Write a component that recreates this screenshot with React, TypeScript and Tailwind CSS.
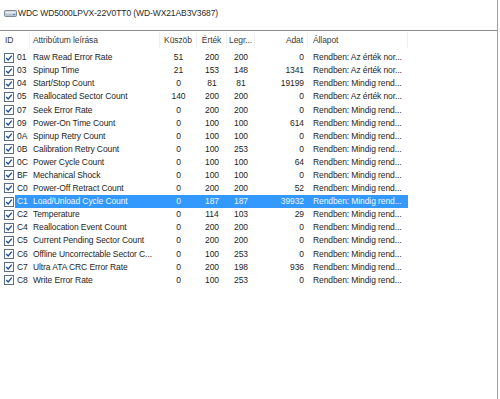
import React from 'react';

type Attr = {
  id: string;
  name: string;
  threshold: string;
  value: string;
  worst: string;
  raw: string;
  status: string;
};

const OK_NORM = 'Rendben: Az érték nor...';
const OK_ALWAYS = 'Rendben: Mindig rend...';

const attributes: Attr[] = [
  { id: '01', name: 'Raw Read Error Rate', threshold: '51', value: '200', worst: '200', raw: '0', status: OK_NORM },
  { id: '03', name: 'Spinup Time', threshold: '21', value: '153', worst: '148', raw: '1341', status: OK_NORM },
  { id: '04', name: 'Start/Stop Count', threshold: '0', value: '81', worst: '81', raw: '19199', status: OK_ALWAYS },
  { id: '05', name: 'Reallocated Sector Count', threshold: '140', value: '200', worst: '200', raw: '0', status: OK_NORM },
  { id: '07', name: 'Seek Error Rate', threshold: '0', value: '200', worst: '200', raw: '0', status: OK_ALWAYS },
  { id: '09', name: 'Power-On Time Count', threshold: '0', value: '100', worst: '100', raw: '614', status: OK_ALWAYS },
  { id: '0A', name: 'Spinup Retry Count', threshold: '0', value: '100', worst: '100', raw: '0', status: OK_ALWAYS },
  { id: '0B', name: 'Calibration Retry Count', threshold: '0', value: '100', worst: '253', raw: '0', status: OK_ALWAYS },
  { id: '0C', name: 'Power Cycle Count', threshold: '0', value: '100', worst: '100', raw: '64', status: OK_ALWAYS },
  { id: 'BF', name: 'Mechanical Shock', threshold: '0', value: '100', worst: '100', raw: '0', status: OK_ALWAYS },
  { id: 'C0', name: 'Power-Off Retract Count', threshold: '0', value: '200', worst: '200', raw: '52', status: OK_ALWAYS },
  { id: 'C1', name: 'Load/Unload Cycle Count', threshold: '0', value: '187', worst: '187', raw: '39932', status: OK_ALWAYS },
  { id: 'C2', name: 'Temperature', threshold: '0', value: '114', worst: '103', raw: '29', status: OK_ALWAYS },
  { id: 'C4', name: 'Reallocation Event Count', threshold: '0', value: '200', worst: '200', raw: '0', status: OK_ALWAYS },
  { id: 'C5', name: 'Current Pending Sector Count', threshold: '0', value: '200', worst: '200', raw: '0', status: OK_ALWAYS },
  { id: 'C6', name: 'Offline Uncorrectable Sector C...', threshold: '0', value: '100', worst: '253', raw: '0', status: OK_ALWAYS },
  { id: 'C7', name: 'Ultra ATA CRC Error Rate', threshold: '0', value: '200', worst: '198', raw: '936', status: OK_ALWAYS },
  { id: 'C8', name: 'Write Error Rate', threshold: '0', value: '100', worst: '253', raw: '0', status: OK_ALWAYS },
];

const DriveIcon = () => (
  <svg width="13" height="8" viewBox="0 0 13 8">
    <rect x="0.5" y="1.5" width="12" height="6" rx="1" fill="#b9c3cc" stroke="#7d8994" />
    <rect x="1.5" y="2.5" width="10" height="2" fill="#e6edf3" />
    <rect x="9" y="5" width="2" height="1" fill="#3c8ad8" />
  </svg>
);

const CheckBox = () => (
  <svg width="10" height="10" viewBox="0 0 10 10">
    <rect x="0.5" y="0.5" width="9" height="9" fill="#ffffff" stroke="#5a6e86" />
    <path d="M2.2 5 L4.2 7 L7.8 2.6" fill="none" stroke="#1f4f9a" strokeWidth="1.4" />
  </svg>
);

const HeaderCell = ({ children, className = '' }: { children?: React.ReactNode; className?: string }) => (
  <div className={`h-full flex items-center border-r border-[#f0f0f0] ${className}`}>{children}</div>
);

const App: React.FC = () => {
  return (
    <div
      className="w-[500px] h-[399px] bg-white text-[#1e1e1e] overflow-hidden flex"
      style={{ fontFamily: '"Liberation Sans", Arial, sans-serif' }}
    >
      <div className="w-[498px] h-full flex flex-col border-r border-[#a0a0a0]">
        {/* Drive title */}
        <div className="h-[31px] flex items-start pt-[7px] pl-[4px] gap-[1px] text-[8.5px] tracking-[-0.1px] text-[#2a2a2a] border-b border-[#8c8c8c]">
          <div className="pt-[2px]">
            <DriveIcon />
          </div>
          <span>WDC WD5000LPVX-22V0TT0 (WD-WX21AB3V3687)</span>
        </div>

        {/* Column headers */}
        <div className="h-[17px] pt-[1px] flex text-[8.5px] tracking-[-0.1px] text-[#3a3a3a]">
          <HeaderCell className="w-[30px] pl-[5px]">ID</HeaderCell>
          <HeaderCell className="w-[130px] pl-[3px]">Attribútum leírása</HeaderCell>
          <HeaderCell className="w-[37px] justify-center">Küszöb</HeaderCell>
          <HeaderCell className="w-[30px] justify-center">Érték</HeaderCell>
          <HeaderCell className="w-[28px] justify-center">Legr...</HeaderCell>
          <HeaderCell className="w-[53px] justify-end pr-[4px]">Adat</HeaderCell>
          <HeaderCell className="w-[100px] pl-[5px]">Állapot</HeaderCell>
        </div>

        {/* Attribute rows */}
        <div className="pt-[3px] flex flex-col text-[8.5px] tracking-[-0.1px]">
          {attributes.map((a) => {
            const selected = a.id === 'C1';
            return (
              <div key={a.id} className="h-[13.1px] flex items-center">
                <div className="w-[15px] pl-[4px] flex items-center">
                  <CheckBox />
                </div>
                <div
                  className={`h-full flex items-center ${
                    selected ? 'bg-[#3399ff] text-[#eef6ff]' : ''
                  }`}
                >
                  <div className="w-[15px] pl-[2px]">{a.id}</div>
                  <div className="w-[130px] pl-[3px] whitespace-nowrap">{a.name}</div>
                  <div className="w-[37px] text-center">{a.threshold}</div>
                  <div className="w-[30px] text-center">{a.value}</div>
                  <div className="w-[28px] text-center">{a.worst}</div>
                  <div className="w-[53px] text-right pr-[4px]">{a.raw}</div>
                  <div className="w-[100px] pl-[5px] whitespace-nowrap">{a.status}</div>
                </div>
              </div>
            );
          })}
        </div>
      </div>
    </div>
  );
};

export default App;
